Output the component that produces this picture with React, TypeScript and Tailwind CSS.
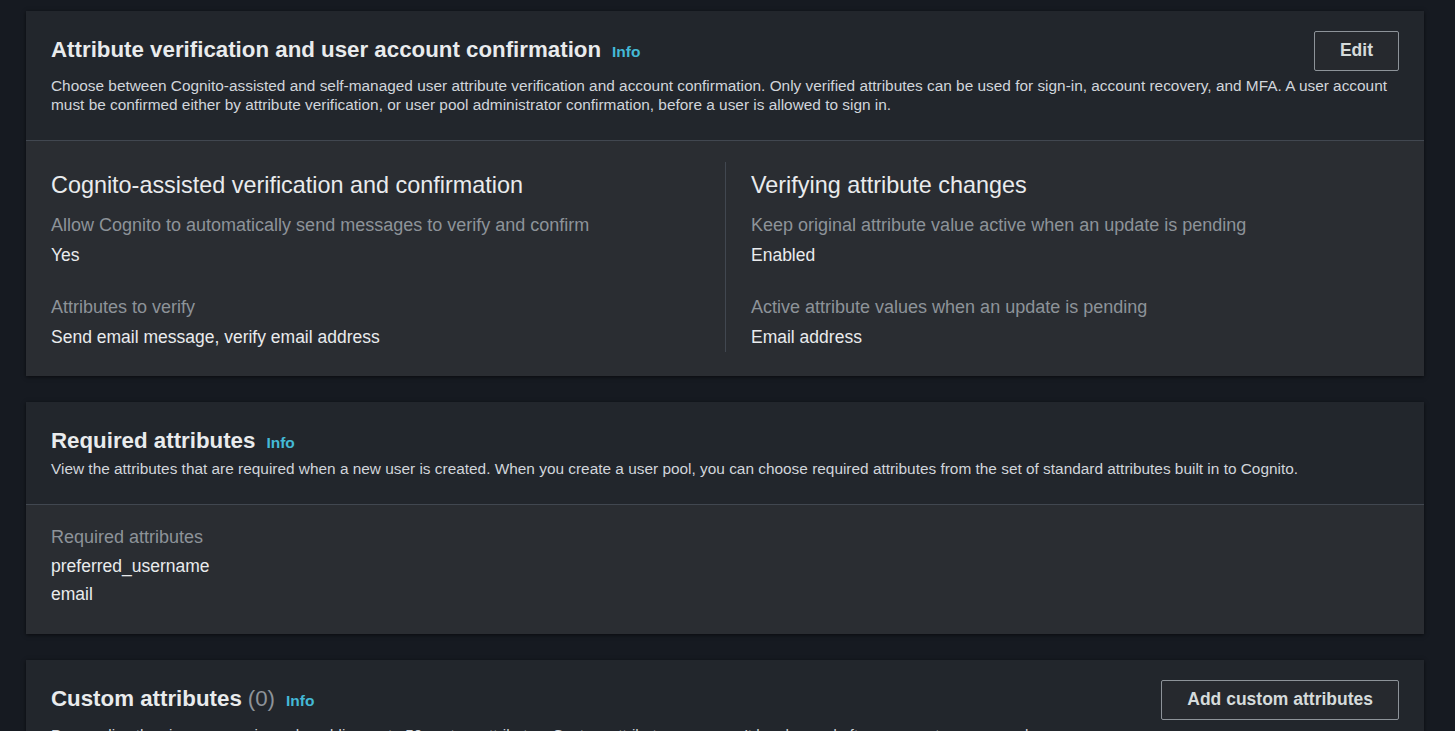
import React from "react";

const font = { fontFamily: '"Liberation Sans", Arial, sans-serif' };

function Info() {
  return (
    <a className="ml-[11px] text-[15.5px] font-bold text-[#44b9d6] leading-none">Info</a>
  );
}

function OutlineButton({ children }: { children: React.ReactNode }) {
  return (
    <button className="h-10 px-[25px] rounded-[2px] border border-[#8d9399] bg-[#26292e] text-[17.5px] font-bold text-[#d5dbdb] leading-none">
      {children}
    </button>
  );
}

interface HeaderProps {
  title: React.ReactNode;
  description: string;
  action?: React.ReactNode;
}

function CardHeader({ title, description, action }: HeaderProps) {
  return (
    <div className="bg-[#22262c] px-[25px] pt-5 pb-[26px] border-b border-[#414750]">
      <div className="flex items-start justify-between">
        <h2 className="pt-[6px] flex items-baseline text-[22.3px] font-bold leading-[26px] text-[#e9ebed]">
          {title}
          <Info />
        </h2>
        {action}
      </div>
      <p className="mt-[5px] text-[15.4px] leading-[19px] text-[#d1d5db]">{description}</p>
    </div>
  );
}

function Field({ label, value, first }: { label: string; value: string; first?: boolean }) {
  return (
    <div className={first ? "mt-[10px]" : "mt-[22px]"}>
      <div className="text-[18px] leading-[30px] text-[#8d9399]">{label}</div>
      <div className="text-[17.5px] leading-[30px] text-[#e9ebed]">{value}</div>
    </div>
  );
}

export default function App() {
  return (
    <div style={font} className="min-h-screen bg-[#161a21] pl-[26px] pr-[31px] pt-[11px] flex flex-col gap-[26px]">
      {/* Attribute verification */}
      <section className="bg-[#2a2d32] shadow-[0_1px_4px_rgba(0,0,0,0.6)]">
        <CardHeader
          title="Attribute verification and user account confirmation"
          description="Choose between Cognito-assisted and self-managed user attribute verification and account confirmation. Only verified attributes can be used for sign-in, account recovery, and MFA. A user account must be confirmed either by attribute verification, or user pool administrator confirmation, before a user is allowed to sign in."
          action={<OutlineButton>Edit</OutlineButton>}
        />
        <div className="px-[25px] pt-[21px] pb-[24px] grid grid-cols-2">
          <div className="pt-2 pr-5">
            <h3 className="text-[23.4px] leading-[30px] text-[#e9ebed]">Cognito-assisted verification and confirmation</h3>
            <Field first label="Allow Cognito to automatically send messages to verify and confirm" value="Yes" />
            <Field label="Attributes to verify" value="Send email message, verify email address" />
          </div>
          <div className="pt-2 pl-[25px] border-l border-[#414750]">
            <h3 className="text-[23.4px] leading-[30px] text-[#e9ebed]">Verifying attribute changes</h3>
            <Field first label="Keep original attribute value active when an update is pending" value="Enabled" />
            <Field label="Active attribute values when an update is pending" value="Email address" />
          </div>
        </div>
      </section>

      {/* Required attributes */}
      <section className="bg-[#2a2d32] shadow-[0_1px_4px_rgba(0,0,0,0.6)]">
        <CardHeader
          title="Required attributes"
          description="View the attributes that are required when a new user is created. When you create a user pool, you can choose required attributes from the set of standard attributes built in to Cognito."
        />
        <div className="px-[25px] pt-[17px] pb-[26px]">
          <div className="text-[18px] leading-[30px] text-[#8d9399]">Required attributes</div>
          <div className="text-[17.5px] leading-[28px] text-[#e9ebed]">preferred_username</div>
          <div className="text-[17.5px] leading-[28px] text-[#e9ebed]">email</div>
        </div>
      </section>

      {/* Custom attributes */}
      <section className="bg-[#2a2d32] shadow-[0_1px_4px_rgba(0,0,0,0.6)]">
        <CardHeader
          title={
            <>
              Custom attributes
              <span className="ml-[6px] font-normal text-[#8d9399]">(0)</span>
            </>
          }
          description="Personalize the sign-up experience by adding up to 50 custom attributes. Custom attribute names can't be changed after you create a user pool."
          action={<OutlineButton>Add custom attributes</OutlineButton>}
        />
      </section>
    </div>
  );
}
